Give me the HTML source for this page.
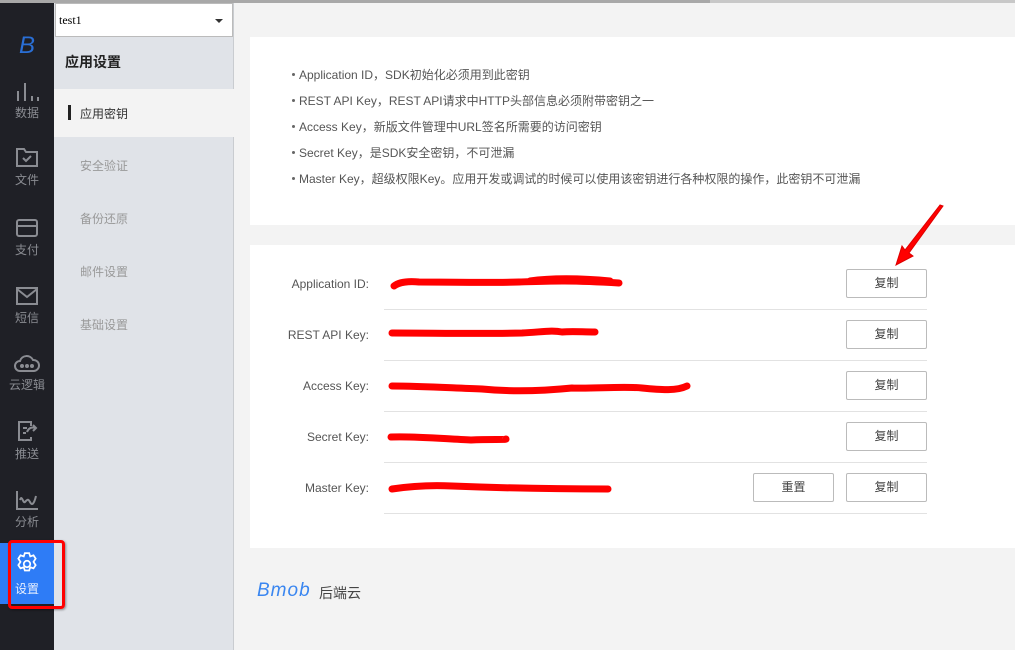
<!DOCTYPE html>
<html><head><meta charset="utf-8"><style>
*{margin:0;padding:0;box-sizing:border-box}
body{width:1015px;height:650px;overflow:hidden;background:#f3f3f3;font-family:"Liberation Sans","Noto Sans CJK SC",sans-serif;position:relative}
.top{position:absolute;left:0;top:0;width:1015px;height:3px;background:#c8c8c8}
.top i{position:absolute;left:0;top:0;width:710px;height:3px;background:#a8a8a8}
.side{position:absolute;left:0;top:3px;width:54px;height:647px;background:#1f2026}
.it{position:absolute;left:0;width:54px;text-align:center;color:#8a8c92;font-size:12px}
.it svg{display:block;margin:0 auto 3px}
.nav{position:absolute;left:54px;top:3px;width:180px;height:647px;background:#e0e3e8;border-right:1px solid #c9ccd0}
.sel{position:absolute;left:55px;top:3px;width:178px;height:34px;background:#fff;border:1px solid #bbb;font-family:"Liberation Serif",serif;font-size:12px;padding:9px 3px}
.sel b{position:absolute;right:9px;top:15px;border:4px solid transparent;border-top:4px solid #333;border-bottom:0}
.nt{position:absolute;left:65px;top:52px;font-size:14px;font-weight:bold;color:#222}
.ni{position:absolute;left:80px;font-size:12px;color:#999}
.act{position:absolute;left:54px;top:89px;width:180px;height:48px;background:#f3f3f3}
.card{position:absolute;left:250px;width:765px;background:#fff}
.li{position:absolute;left:299px;font-size:12px;color:#555}
.li:before{content:"";position:absolute;left:-7px;top:7px;width:3px;height:3px;border-radius:50%;background:#666}
.lab{position:absolute;right:646px;font-size:12px;color:#555;width:120px;text-align:right}
.sep{position:absolute;left:384px;width:543px;height:1px;background:#e2e2e2}
.btn{position:absolute;width:81px;height:29px;border:1px solid #bbb;border-radius:2px;background:#fff;font-size:12px;color:#444;text-align:center;line-height:27px}
</style></head><body>
<div class="top"><i></i></div>
<div class="side">
<div style="position:absolute;left:0;top:29px;width:54px;text-align:center;color:#2a6fd6;font-size:24px;font-style:italic;font-family:'Liberation Sans',sans-serif">B</div>
<div class="it" style="top:74px"><svg width="24" height="24" viewBox="0 0 24 24" fill="none" stroke="#8a8c92" stroke-width="2"><path d="M3 24V14M10 24V6M17 24V19M23 24V20"/></svg>数据</div>
<div class="it" style="top:143px"><svg width="24" height="22" viewBox="0 0 24 22" fill="none" stroke="#8a8c92" stroke-width="2"><path d="M2 3h7l2 3h11v14H2z"/><path d="M8 12l3 3 5-5"/></svg>文件</div>
<div class="it" style="top:215px"><svg width="24" height="20" viewBox="0 0 24 20" fill="none" stroke="#8a8c92" stroke-width="2"><rect x="2" y="2" width="20" height="16" rx="2"/><path d="M2 8h20"/></svg>支付</div>
<div class="it" style="top:283px"><svg width="24" height="20" viewBox="0 0 24 20" fill="none" stroke="#8a8c92" stroke-width="2"><rect x="2" y="2" width="20" height="16"/><path d="M2 3l10 8 10-8"/></svg>短信</div>
<div class="it" style="top:350px"><svg width="28" height="20" viewBox="0 0 28 20" fill="none" stroke="#8a8c92" stroke-width="2"><path d="M7 18a5 5 0 010-10 7 7 0 0113-1 5 5 0 011 11z"/><circle cx="9" cy="13" r="1" fill="#8a8c92"/><circle cx="14" cy="13" r="1" fill="#8a8c92"/><circle cx="19" cy="13" r="1" fill="#8a8c92"/></svg>云逻辑</div>
<div class="it" style="top:417px"><svg width="24" height="22" viewBox="0 0 24 22" fill="none" stroke="#8a8c92" stroke-width="2"><path d="M16 6V2H4v18h12v-3M8 8h4M8 13h3M12 12c2-5 6-5 9-4M18 5l3 3-3 3"/></svg>推送</div>
<div class="it" style="top:487px"><svg width="24" height="20" viewBox="0 0 24 20" fill="none" stroke="#8a8c92" stroke-width="2"><path d="M2 1v18h21M5 10c2-6 3 4 5 2s3-4 5 0 4 2 6-6"/></svg>分析</div>
<div style="position:absolute;left:0;top:540px;width:54px;height:61px;background:#2e7cf6"></div>
<div class="it" style="top:548px;color:#e6efff"><svg width="26" height="26" viewBox="0 0 24 24" fill="none" stroke="#fff" stroke-width="1.6"><path d="M10 2h4l1 3 3-1 2 3-2 3 2 3-2 3-3-1-1 3h-4l-1-3-3 1-2-3 2-3-2-3 2-3 3 1z"/><circle cx="12" cy="12" r="3"/></svg>设置</div>
</div>
<div class="nav"></div>
<div style="position:absolute;left:8px;top:540px;width:57px;height:69px;border:3px solid #f00;border-radius:4px;box-shadow:1px 1px 2px rgba(0,0,0,.4);z-index:5"></div>
<div class="sel">test1<b></b></div>
<div class="nt">应用设置</div>
<div class="act"><div style="position:absolute;left:14px;top:16px;width:3px;height:15px;background:#222"></div></div>
<div class="ni" style="top:105px;color:#333">应用密钥</div>
<div class="ni" style="top:157px">安全验证</div>
<div class="ni" style="top:210px">备份还原</div>
<div class="ni" style="top:263px">邮件设置</div>
<div class="ni" style="top:316px">基础设置</div>

<div class="card" style="top:37px;height:188px"></div>
<div class="li" style="top:66px">Application ID，SDK初始化必须用到此密钥</div>
<div class="li" style="top:92px">REST API Key，REST API请求中HTTP头部信息必须附带密钥之一</div>
<div class="li" style="top:118px">Access Key，新版文件管理中URL签名所需要的访问密钥</div>
<div class="li" style="top:144px">Secret Key，是SDK安全密钥，不可泄漏</div>
<div class="li" style="top:170px">Master Key，超级权限Key。应用开发或调试的时候可以使用该密钥进行各种权限的操作，此密钥不可泄漏</div>

<div class="card" style="top:245px;height:303px"></div>
<div class="lab" style="top:277px">Application ID:</div>
<div class="lab" style="top:328px">REST API Key:</div>
<div class="lab" style="top:379px">Access Key:</div>
<div class="lab" style="top:430px">Secret Key:</div>
<div class="lab" style="top:481px">Master Key:</div>
<div class="sep" style="top:309px"></div><div class="sep" style="top:360px"></div><div class="sep" style="top:411px"></div><div class="sep" style="top:462px"></div><div class="sep" style="top:513px"></div>
<div class="btn" style="left:846px;top:269px">复制</div>
<div class="btn" style="left:846px;top:320px">复制</div>
<div class="btn" style="left:846px;top:371px">复制</div>
<div class="btn" style="left:846px;top:422px">复制</div>
<div class="btn" style="left:846px;top:473px">复制</div>
<div class="btn" style="left:753px;top:473px">重置</div>

<svg style="position:absolute;left:0;top:0" width="1015" height="650" fill="none" stroke="#f00" stroke-linecap="round" stroke-width="7">
<path d="M394 286c5-4 15-5 25-4 40 0 60 1 100 0 30-1 50-2 100 1M530 281c20-3 50-3 80 0"/>
<path d="M392 333c40 0 90 1 130 0 20-1 30-3 40-1 10-1 20 0 33 0"/>
<path d="M392 386c30 0 60 2 90 3 30 3 60 2 90-1 20 1 50-2 70 0 20 2 35 3 45-2"/>
<path d="M391 437c25-1 55 2 80 3 20-1 35 0 35-1"/>
<path d="M392 489c20-3 40-4 60-3 50 2 100 3 156 3"/>
</svg>
<svg style="position:absolute;left:0;top:0" width="1015" height="650"><path d="M940 205L905 250l-3-4-6 19 17-9-4-3 34-47z" fill="#f00" stroke="#d00" stroke-width="1"/></svg>

<div style="position:absolute;left:257px;top:580px;font-size:19px;color:#3a86f0;font-style:italic;letter-spacing:1px">Bmob</div>
<div style="position:absolute;left:319px;top:583px;font-size:14px;color:#444">后端云</div>
</body></html>
